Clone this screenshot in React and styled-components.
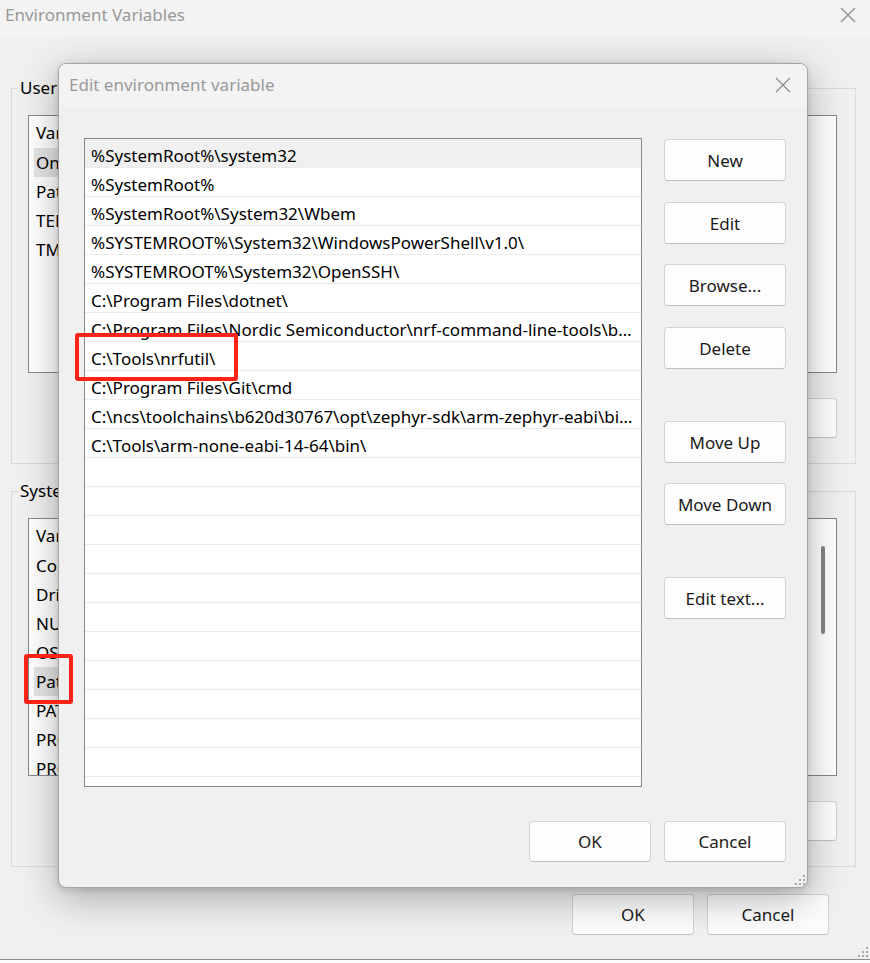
import React from "react";
import styled, { createGlobalStyle } from "styled-components";

const GlobalStyle = createGlobalStyle`
  html, body {
    margin: 0;
    padding: 0;
    background: #ffffff;
  }
  body {
    font-family: "Noto Sans", "DejaVu Sans", sans-serif;
    font-size: 17px;
    color: #000;
  }
  * {
    box-sizing: border-box;
  }
`;

const Page = styled.div`
  position: relative;
  width: 870px;
  height: 963px;
  overflow: hidden;
  background: #fbfbfb;
`;

/* ---------- outer window ---------- */

const Window = styled.div`
  position: relative;
  height: 960px;
  background: #f0f0f0;
  border-bottom: 1px solid #8f8f8f;
  display: flex;
  flex-direction: column;
`;

const TitleBar = styled.div`
  height: ${(p) => p.$height}px;
  flex: none;
  display: flex;
  align-items: center;
  justify-content: space-between;
  background: #f3f3f3;
  padding: 0 ${(p) => p.$right}px ${(p) => p.$lift || 0}px ${(p) => p.$left}px;
`;

const TitleText = styled.span`
  color: #999999;
  font-size: 17px;
  line-height: 24px;
`;

const WindowBody = styled.div`
  display: flex;
  flex-direction: column;
  padding: 39px 14px 0 11px;
`;

const Group = styled.fieldset`
  margin: 0;
  min-width: 0;
  border: 1px solid #dadada;
  padding: 15px 18px 25px 16px;

  & + & {
    margin-top: 15px;
  }
`;

const Legend = styled.legend`
  font-size: 17px;
  line-height: 24px;
  padding: 0 2px;
  margin-left: -10px;
  white-space: nowrap;
`;

const VarList = styled.div`
  position: relative;
  height: 258px;
  background: #ffffff;
  border: 1px solid #828790;
  overflow: hidden;
`;

const VarHeader = styled.div`
  height: 32px;
  display: flex;
  align-items: center;
  padding-left: 7px;
`;

const VarRow = styled.div`
  height: 29px;
  display: flex;
  align-items: stretch;
  margin-left: 5px;
`;

const NameCell = styled.span`
  width: 190px;
  flex: none;
  display: flex;
  align-items: center;
  padding-left: 2px;
  white-space: nowrap;
  overflow: hidden;
  background: ${(p) => (p.$selected ? "#e5e5e5" : "transparent")};
`;

const ScrollThumb = styled.div`
  position: absolute;
  right: 11px;
  top: 27px;
  width: 4px;
  height: 88px;
  border-radius: 2px;
  background: #858585;
`;

const ButtonRow = styled.div`
  display: flex;
  justify-content: flex-end;
  gap: 13px;
  margin-top: ${(p) => p.$top}px;
  padding-right: ${(p) => p.$right || 0}px;
`;

const Button = styled.button`
  width: 122px;
  height: ${(p) => p.$h || 42}px;
  margin-top: ${(p) => p.$top || 0}px;
  flex: none;
  font-family: inherit;
  font-size: 17px;
  color: #1b1b1b;
  background: #fdfdfd;
  border: 1px solid #d3d3d3;
  border-bottom-color: #c0c0c0;
  border-radius: 4px;
  padding: 0;
`;

/* ---------- edit dialog ---------- */

const Dialog = styled.div`
  position: absolute;
  left: 58px;
  top: 63px;
  width: 750px;
  height: 825px;
  display: flex;
  flex-direction: column;
  background: #f0f0f0;
  border: 1px solid #a5a5a5;
  border-radius: 8px;
  overflow: hidden;
  box-shadow: 0 10px 38px rgba(0, 0, 0, 0.3), 0 2px 6px rgba(0, 0, 0, 0.12);
`;

const DialogBody = styled.div`
  display: grid;
  grid-template-columns: 1fr 122px;
  column-gap: 22px;
  padding: 31px 21px 0 25px;
`;

const PathList = styled.div`
  height: 649px;
  background: #ffffff;
  border: 1px solid #828790;
  overflow: hidden;
`;

const PathRow = styled.div`
  height: 29px;
  line-height: 28px;
  padding: 3px 6px 0 6px;
  border-bottom: 1px solid #ececec;
  background: ${(p) => (p.$selected ? "#f0f0f0" : "#ffffff")};
  white-space: nowrap;
  overflow: hidden;
  text-overflow: ellipsis;
`;

const SideButtons = styled.div`
  display: flex;
  flex-direction: column;
`;

const Highlight = styled.div`
  position: absolute;
  left: ${(p) => p.$x}px;
  top: ${(p) => p.$y}px;
  width: ${(p) => p.$w}px;
  height: ${(p) => p.$h}px;
  border: 4px solid #ff2216;
  border-radius: 3px;
`;

const GripWrap = styled.div`
  position: absolute;
  right: ${(p) => p.$r}px;
  bottom: ${(p) => p.$b}px;
  width: 10px;
  height: 10px;
  line-height: 0;
`;

const CloseIcon = () => (
  <svg width="16" height="16" viewBox="0 0 16 16">
    <path d="M1 1 L15 15 M15 1 L1 15" stroke="#8a8a8a" strokeWidth="1.2" fill="none" />
  </svg>
);

const Grip = ({ r, b }) => (
  <GripWrap $r={r} $b={b}>
    <svg width="10" height="10" viewBox="0 0 10 10">
      <g fill="#a8a8a8">
        <rect x="8" y="0" width="2" height="2" />
        <rect x="4" y="4" width="2" height="2" />
        <rect x="8" y="4" width="2" height="2" />
        <rect x="0" y="8" width="2" height="2" />
        <rect x="4" y="8" width="2" height="2" />
        <rect x="8" y="8" width="2" height="2" />
      </g>
    </svg>
  </GripWrap>
);

const userVars = ["OneDrive", "Path", "TEMP", "TMP"];

const systemVars = [
  "ComSpec",
  "DriverData",
  "NUMBER_OF_PROCESSORS",
  "OS",
  "Path",
  "PATHEXT",
  "PROCESSOR_ARCHITECTURE",
  "PROCESSOR_IDENTIFIER",
  "PROCESSOR_LEVEL",
];

const paths = [
  "%SystemRoot%\\system32",
  "%SystemRoot%",
  "%SystemRoot%\\System32\\Wbem",
  "%SYSTEMROOT%\\System32\\WindowsPowerShell\\v1.0\\",
  "%SYSTEMROOT%\\System32\\OpenSSH\\",
  "C:\\Program Files\\dotnet\\",
  "C:\\Program Files\\Nordic Semiconductor\\nrf-command-line-tools\\bin\\",
  "C:\\Tools\\nrfutil\\",
  "C:\\Program Files\\Git\\cmd",
  "C:\\ncs\\toolchains\\b620d30767\\opt\\zephyr-sdk\\arm-zephyr-eabi\\bin\\",
  "C:\\Tools\\arm-none-eabi-14-64\\bin\\",
];

const sideButtons = [
  ["New", 1],
  ["Edit", 21],
  ["Browse...", 20],
  ["Delete", 21],
  ["Move Up", 52],
  ["Move Down", 20],
  ["Edit text...", 52],
];

const VariableGroup = ({ title, vars, selected, scroll }) => (
  <Group>
    <Legend>{title}</Legend>
    <VarList>
      <VarHeader>Variable</VarHeader>
      {vars.map((name) => (
        <VarRow key={name}>
          <NameCell $selected={name === selected}>{name}</NameCell>
        </VarRow>
      ))}
      {scroll && <ScrollThumb />}
    </VarList>
    <ButtonRow $top={25}>
      <Button $h={40}>New...</Button>
      <Button $h={40}>Edit...</Button>
      <Button $h={40}>Delete</Button>
    </ButtonRow>
  </Group>
);

export default function App() {
  const rows = [...paths, ...Array(12).fill("")];

  return (
    <Page>
      <GlobalStyle />
      <Window>
        <TitleBar $height={37} $left={5} $right={14} $lift={7}>
          <TitleText>Environment Variables</TitleText>
          <CloseIcon />
        </TitleBar>
        <WindowBody>
          <VariableGroup title="User variables" vars={userVars} selected="OneDrive" />
          <VariableGroup title="System variables" vars={systemVars} selected="Path" scroll />
          <ButtonRow $top={27} $right={27}>
            <Button $h={41}>OK</Button>
            <Button $h={41}>Cancel</Button>
          </ButtonRow>
        </WindowBody>
        <Grip r={2} b={2} />
      </Window>

      <Dialog>
        <TitleBar $height={43} $left={10} $right={16} $lift={1}>
          <TitleText>Edit environment variable</TitleText>
          <CloseIcon />
        </TitleBar>
        <DialogBody>
          <PathList>
            {rows.map((p, i) => (
              <PathRow key={i} $selected={i === 0}>
                {p || "\u00a0"}
              </PathRow>
            ))}
          </PathList>
          <SideButtons>
            {sideButtons.map(([label, top]) => (
              <Button key={label} $top={top}>
                {label}
              </Button>
            ))}
          </SideButtons>
        </DialogBody>
        <ButtonRow $top={34} $right={21}>
          <Button $h={41}>OK</Button>
          <Button $h={41}>Cancel</Button>
        </ButtonRow>
        <Grip r={2} b={2} />
      </Dialog>

      <Highlight $x={75} $y={333} $w={163} $h={48} />
      <Highlight $x={24} $y={654} $w={49} $h={50} />
    </Page>
  );
}
